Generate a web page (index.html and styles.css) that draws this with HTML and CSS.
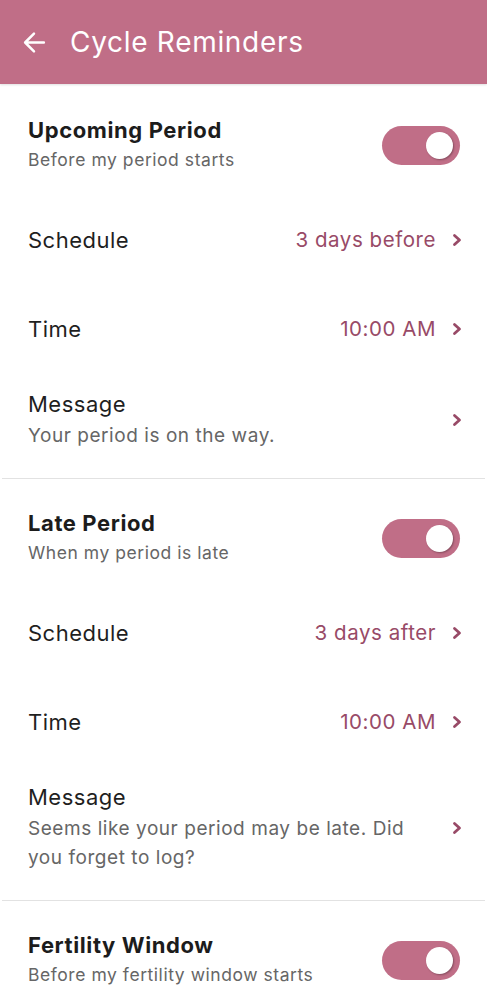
FILE: index.html
```html
<!DOCTYPE html>
<html lang="en">
<head>
<meta charset="utf-8">
<title>Cycle Reminders</title>
<link rel="stylesheet" href="styles.css">
</head>
<body>
<header class="appbar">
  <svg class="back" viewBox="0 0 24 24" width="24" height="24" aria-hidden="true">
    <path d="M21 12H3.5M11.5 3.5L3 12l8.5 8.5" fill="none" stroke="#fff" stroke-width="2.4" stroke-linecap="round" stroke-linejoin="round"/>
  </svg>
  <h1 class="appbar-title">Cycle Reminders</h1>
</header>
<main class="content">
  <section class="group">
    <div class="group-head">
      <div class="head-text">
        <div class="group-title">Upcoming Period</div>
        <div class="sub">Before my period starts</div>
      </div>
      <div class="switch"><span class="knob"></span></div>
    </div>
    <div class="row">
      <span class="label">Schedule</span>
      <span class="value">3 days before</span>
      <svg class="chev" viewBox="0 0 12 14" width="12" height="14"><path d="M3.5 2.5L8.5 7l-5 4.5" fill="none" stroke="currentColor" stroke-width="2.8" stroke-linecap="round" stroke-linejoin="round"/></svg>
    </div>
    <div class="row">
      <span class="label">Time</span>
      <span class="value">10:00 AM</span>
      <svg class="chev" viewBox="0 0 12 14" width="12" height="14"><path d="M3.5 2.5L8.5 7l-5 4.5" fill="none" stroke="currentColor" stroke-width="2.8" stroke-linecap="round" stroke-linejoin="round"/></svg>
    </div>
    <div class="msg">
      <div class="msg-text">
        <div class="label">Message</div>
        <div class="msg-sub">Your period is on the way.</div>
      </div>
      <svg class="chev" viewBox="0 0 12 14" width="12" height="14"><path d="M3.5 2.5L8.5 7l-5 4.5" fill="none" stroke="currentColor" stroke-width="2.8" stroke-linecap="round" stroke-linejoin="round"/></svg>
    </div>
  </section>

  <section class="group">
    <div class="group-head">
      <div class="head-text">
        <div class="group-title">Late Period</div>
        <div class="sub">When my period is late</div>
      </div>
      <div class="switch"><span class="knob"></span></div>
    </div>
    <div class="row">
      <span class="label">Schedule</span>
      <span class="value">3 days after</span>
      <svg class="chev" viewBox="0 0 12 14" width="12" height="14"><path d="M3.5 2.5L8.5 7l-5 4.5" fill="none" stroke="currentColor" stroke-width="2.8" stroke-linecap="round" stroke-linejoin="round"/></svg>
    </div>
    <div class="row">
      <span class="label">Time</span>
      <span class="value">10:00 AM</span>
      <svg class="chev" viewBox="0 0 12 14" width="12" height="14"><path d="M3.5 2.5L8.5 7l-5 4.5" fill="none" stroke="currentColor" stroke-width="2.8" stroke-linecap="round" stroke-linejoin="round"/></svg>
    </div>
    <div class="msg">
      <div class="msg-text">
        <div class="label">Message</div>
        <div class="msg-sub">Seems like your period may be late. Did you forget to log?</div>
      </div>
      <svg class="chev" viewBox="0 0 12 14" width="12" height="14"><path d="M3.5 2.5L8.5 7l-5 4.5" fill="none" stroke="currentColor" stroke-width="2.8" stroke-linecap="round" stroke-linejoin="round"/></svg>
    </div>
  </section>

  <section class="group">
    <div class="group-head">
      <div class="head-text">
        <div class="group-title">Fertility Window</div>
        <div class="sub">Before my fertility window starts</div>
      </div>
      <div class="switch"><span class="knob"></span></div>
    </div>
  </section>
</main>
</body>
</html>
```
FILE: styles.css
```css
* { box-sizing: border-box; }

html, body {
  margin: 0;
  padding: 0;
  background: #ffffff;
}

body {
  font-family: Inter, "Open Sans", sans-serif;
  color: #1f1f1f;
  overflow: hidden;
}

.appbar {
  height: 84px;
  background: #c06e87;
  display: flex;
  align-items: center;
  padding-left: 22px;
  box-shadow: 0 1px 2px rgba(0,0,0,0.12);
}

.back {
  width: 25px;
  height: 25px;
  flex: none;
}

.appbar-title {
  margin: 0 0 0 23px;
  font-size: 28px;
  font-weight: 400;
  color: #ffffff;
  letter-spacing: 0.7px;
  line-height: 1;
}

.content {
  padding-top: 2px;
}

.group {
  margin: 0 2px;
  padding: 30px 22px 28px 26px;
  border-bottom: 1px solid #e2e2e2;
}

.group:last-child {
  border-bottom: none;
}

.group-head {
  display: flex;
  align-items: center;
  justify-content: space-between;
  height: 58px;
  margin-bottom: 21px;
}

.group:last-child .group-head {
  margin-bottom: 0;
}

.head-text {
  display: flex;
  flex-direction: column;
  gap: 2px;
}

.group-title {
  font-size: 22px;
  font-weight: 700;
  line-height: 28px;
  color: #1c1c1c;
  letter-spacing: 0.6px;
}

.sub {
  font-size: 17.5px;
  line-height: 28px;
  color: #666666;
  letter-spacing: 0.55px;
}

.switch {
  width: 78px;
  height: 39px;
  border-radius: 20px;
  background: #c06e87;
  margin-right: 3px;
  display: flex;
  align-items: center;
  justify-content: flex-end;
  padding-right: 7px;
}

.knob {
  width: 27px;
  height: 27px;
  border-radius: 50%;
  background: #ffffff;
  box-shadow: 1px 1px 2px rgba(0,0,0,0.3);
}

.row {
  height: 89px;
  display: flex;
  align-items: center;
}

.label {
  font-size: 22px;
  line-height: 28px;
  color: #1f1f1f;
  letter-spacing: 0.5px;
}

.row .label {
  flex: 1;
}

.value {
  font-size: 20.5px;
  color: #984a67;
  letter-spacing: 0.55px;
  margin-right: 15px;
}

.chev {
  flex: none;
  color: #984a67;
}

.msg {
  display: flex;
  align-items: center;
  padding-top: 17px;
}

.msg-text {
  flex: 1;
  padding-right: 36px;
}

.msg-sub {
  margin-top: 3px;
  font-size: 19px;
  line-height: 29px;
  color: #666666;
  letter-spacing: 0.55px;
}
```
